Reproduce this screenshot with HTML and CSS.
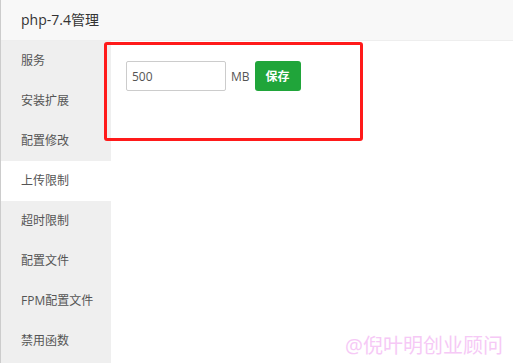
FILE: index.html
```html
<!DOCTYPE html>
<html lang="zh-CN">
<head>
    <meta charset="UTF-8">
    <title>php-7.4管理</title>
    <link rel="stylesheet" href="styles.css">
</head>
<body>
<div class="layer">
    <div class="layer-title">php-7.4管理</div>
    <div class="layer-body">
        <ul class="side-menu">
            <li>服务</li>
            <li>安装扩展</li>
            <li>配置修改</li>
            <li class="active">上传限制</li>
            <li>超时限制</li>
            <li>配置文件</li>
            <li>FPM配置文件</li>
            <li>禁用函数</li>
        </ul>
        <div class="content">
            <div class="upload-row">
                <input type="text" class="size-input" value="500">
                <span class="unit">MB</span>
                <button class="btn-save">保存</button>
            </div>
            <div class="mark-box"></div>
        </div>
    </div>
    <div class="watermark">@倪叶明创业顾问</div>
</div>
</body>
</html>
```

FILE: styles.css
```css
html, body {
    margin: 0;
    padding: 0;
    background: #fff;
}

body {
    font-family: "Open Sans", "Noto Sans CJK SC", sans-serif;
    font-size: 12px;
    color: #555;
}

.layer {
    position: relative;
    width: 513px;
    height: 363px;
    overflow: hidden;
    border-left: 1px solid #ccc;
    box-sizing: border-box;
}

.layer-title {
    height: 41px;
    line-height: 40px;
    padding-left: 20px;
    background-color: #f8f8f8;
    border-bottom: 1px solid #eee;
    font-size: 14px;
    color: #333;
    box-sizing: border-box;
}

.layer-body {
    display: flex;
    height: 322px;
}

.side-menu {
    list-style: none;
    margin: 0;
    padding: 0;
    width: 110px;
    background-color: #efefef;
}

.side-menu li {
    height: 40px;
    line-height: 40px;
    padding-left: 20px;
    font-size: 12px;
    color: #555;
}

.side-menu li.active {
    background-color: #fff;
}

.content {
    position: relative;
    flex: 1;
    padding: 20px 15px;
}

.upload-row {
    display: flex;
    align-items: center;
}

.size-input {
    width: 100px;
    height: 30px;
    box-sizing: border-box;
    border: 1px solid #ccc;
    border-radius: 2px;
    padding: 0 5px;
    font-family: inherit;
    font-size: 12px;
    color: #555;
    outline: none;
}

.unit {
    margin: 0 5px;
    font-size: 12px;
    color: #555;
}

.btn-save {
    width: 46px;
    height: 30px;
    border: none;
    border-radius: 3px;
    background-color: #20a53a;
    color: #fff;
    font-family: inherit;
    font-size: 12px;
    font-weight: bold;
    cursor: pointer;
    padding: 0;
}

.mark-box {
    position: absolute;
    left: -7px;
    top: 1px;
    width: 253px;
    height: 93px;
    border: 3px solid #ff1a1a;
    border-radius: 3px;
}

.watermark {
    position: absolute;
    right: 10px;
    bottom: 4px;
    font-size: 20px;
    color: #f6c9f6;
}
```
